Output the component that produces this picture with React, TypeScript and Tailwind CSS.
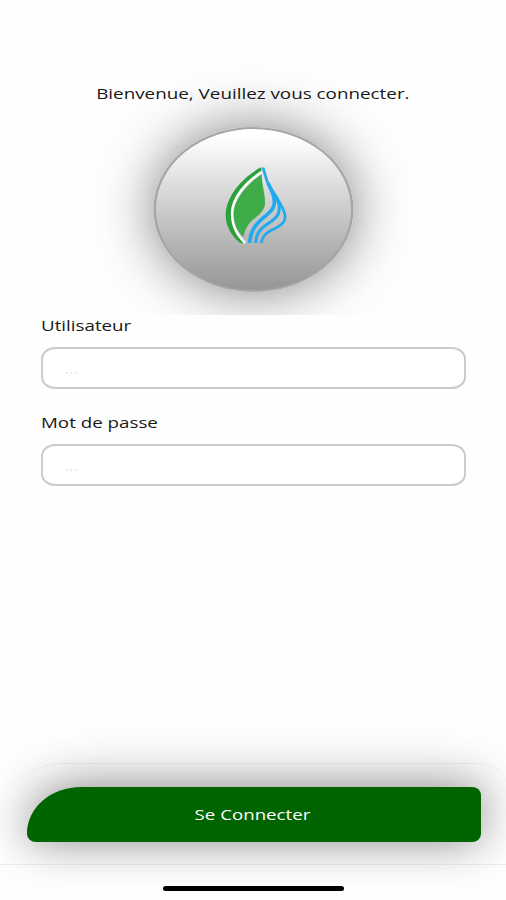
import { useState } from "react";

const Logo = () => (
  <svg viewBox="0 0 270 300" className="h-[100px] w-[90px]" fill="none">
    {/* Leaf */}
    <path
      d="M154 36 C105 62 48 118 47 180 C47 215 66 245 91 264 L108 264 C82 240 66 212 67 175 C68 130 105 86 154 53 Z"
      fill="#2aa13a"
    />
    <path
      d="M155 51 C105 82 66 130 66 176 C66 212 82 242 106 264"
      stroke="#fff"
      strokeWidth="7"
    />
    <path
      d="M155 57 C111 88 72 132 71 176 C71 206 82 230 101 246 C104 224 114 206 131 192 C148 180 164 164 165 146 C166 115 155 90 155 57 Z"
      fill="#3dac49"
    />
    {/* Water */}
    <path
      d="M159 38 C163 50 167 68 172 80 C180 100 188 108 198 123 C209 145 221 159 225 181 C229 201 214 211 198 219 C175 229 157 240 154 264"
      stroke="#1faaf0"
      strokeWidth="8"
    />
    <path
      d="M174 84 C184 106 195 122 193 145 C191 184 122 190 119 264"
      stroke="#1faaf0"
      strokeWidth="11"
    />
    <path
      d="M197 125 C208 143 212 160 204 178 C190 208 139 208 137 264"
      stroke="#1faaf0"
      strokeWidth="9"
    />
  </svg>
);

const App = () => {
  const [user, setUser] = useState("");
  const [password, setPassword] = useState("");

  return (
    <div className="flex h-[900px] w-[506px] flex-col overflow-hidden bg-[#fefefe] font-['Open_Sans',sans-serif] text-[#181818]">
      {/* Header */}
      <header className="flex h-[315px] flex-col items-center overflow-hidden pt-[81px]">
        <h1 className="relative z-10 h-[46px] scale-x-[1.255] text-[15px] leading-6 whitespace-nowrap">
          Bienvenue, Veuillez vous connecter.
        </h1>
        <div className="h-[165px] w-[165px] shrink-0 scale-x-[1.212] rounded-full border-2 border-[#a5a5a5] bg-linear-to-b from-white from-5% to-[#969696] shadow-[0_0_50px_rgba(0,0,0,0.5)]">
          <div className="flex h-full scale-x-[0.825] justify-center pt-[26px]">
            <div className="ml-[2px] shrink-0">
              <Logo />
            </div>
          </div>
        </div>
      </header>

      {/* Form */}
      <form
        id="login"
        className="px-[41px]"
        onSubmit={(e) => e.preventDefault()}
      >
        <div className="h-[97px]">
          <label
            htmlFor="user"
            className="block h-8 origin-left scale-x-[1.25] text-[15px] leading-5"
          >
            Utilisateur
          </label>
          <input
            id="user"
            type="text"
            placeholder="..."
            value={user}
            onChange={(e) => setUser(e.target.value)}
            className="block h-[42px] w-[425px] rounded-[14px/12px] border-2 border-[#cbcbcb] bg-white px-[22px] text-base placeholder:text-[#e8e8e8]"
          />
        </div>
        <div>
          <label
            htmlFor="password"
            className="block h-8 origin-left scale-x-[1.25] text-[15px] leading-5"
          >
            Mot de passe
          </label>
          <input
            id="password"
            type="password"
            placeholder="..."
            value={password}
            onChange={(e) => setPassword(e.target.value)}
            className="block h-[42px] w-[425px] rounded-[14px/12px] border-2 border-[#cbcbcb] bg-white px-[22px] text-base placeholder:text-[#e8e8e8]"
          />
        </div>
      </form>

      {/* Footer */}
      <footer className="mt-auto">
        <div className="h-[102px] rounded-tl-[64px_52px] rounded-tr-[30px_20px] border-y border-t-[#f3f3f3] border-b-[#eeeeee] pr-[25px] pl-[27px] pt-[23px]">
          <button
            type="submit"
            form="login"
            className="block h-[55px] w-[454px] rounded-[54px_9px_9px_9px/46px_8px_8px_8px] bg-[#006400] pr-[3px] text-[15px] font-medium text-white shadow-[0_0_45px_rgba(0,0,0,0.4),0_-12px_60px_rgba(0,0,0,0.1)]"
          >
            <span className="inline-block scale-x-[1.245]">Se Connecter</span>
          </button>
        </div>
        <div className="flex h-[35px] justify-center pt-[21px]">
          <div className="h-[5px] w-[181px] rounded-full bg-black" />
        </div>
      </footer>
    </div>
  );
};

export default App;
